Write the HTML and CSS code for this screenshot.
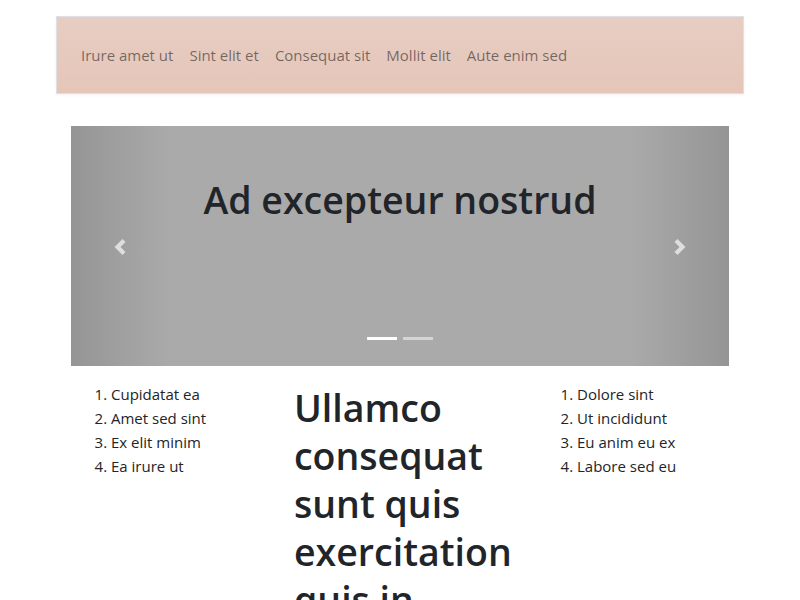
FILE: index.html
```html
<!DOCTYPE html>
<html lang="en">
<head>
<meta charset="utf-8">
<title>Page</title>
<link rel="stylesheet" href="styles.css">
</head>
<body>
<div class="container">
  <nav class="navbar">
    <a class="nav-link" href="#">Irure amet ut</a>
    <a class="nav-link" href="#">Sint elit et</a>
    <a class="nav-link" href="#">Consequat sit</a>
    <a class="nav-link" href="#">Mollit elit</a>
    <a class="nav-link" href="#">Aute enim sed</a>
  </nav>
  <div class="carousel">
    <a class="control control-prev" href="#">
      <svg width="12" height="16" viewBox="0 0 12 16"><path d="M8.5 0 L11.5 3 L6.5 8 L11.5 13 L8.5 16 L0.5 8 Z" fill="currentColor"/></svg>
    </a>
    <h1 class="carousel-title">Ad excepteur nostrud</h1>
    <a class="control control-next" href="#">
      <svg width="12" height="16" viewBox="0 0 12 16"><path d="M3.5 0 L0.5 3 L5.5 8 L0.5 13 L3.5 16 L11.5 8 Z" fill="currentColor"/></svg>
    </a>
    <ol class="indicators">
      <li class="active"></li>
      <li></li>
    </ol>
  </div>
  <div class="columns">
    <ol class="list">
      <li>Cupidatat ea</li>
      <li>Amet sed sint</li>
      <li>Ex elit minim</li>
      <li>Ea irure ut</li>
    </ol>
    <h1 class="big-heading">Ullamco consequat sunt quis exercitation quis in</h1>
    <ol class="list">
      <li>Dolore sint</li>
      <li>Ut incididunt</li>
      <li>Eu anim eu ex</li>
      <li>Labore sed eu</li>
    </ol>
  </div>
</div>
</body>
</html>
```
FILE: styles.css
```css
html, body {
  margin: 0;
  padding: 0;
  background: #fff;
}
body {
  font-family: "Open Sans", "Noto Sans", sans-serif;
  font-size: 15px;
  line-height: 24px;
  color: #212529;
}
.container {
  width: 688px;
  margin: 0 auto;
  padding-top: 16px;
}
.navbar {
  display: flex;
  align-items: center;
  height: 76px;
  padding: 0 16px;
  border: 1px solid #dde0e6;
  background: linear-gradient(to bottom, #e8cdc2, #e5c6b9);
  box-shadow: 0 1px 3px rgba(0,0,0,0.05);
}
.nav-link {
  padding: 8px;
  color: rgba(0,0,0,0.5);
  text-decoration: none;
}
.carousel {
  position: relative;
  margin: 32px 15px 0;
  height: 240px;
  background: #aaaaaa;
  text-align: center;
  overflow: hidden;
}
.carousel-title {
  margin: 0;
  padding-top: 50px;
  font-size: 37.5px;
  line-height: 48px;
  font-weight: 600;
  color: #212529;
}
.control {
  position: absolute;
  top: 0;
  bottom: 0;
  width: 15%;
  display: flex;
  align-items: center;
  justify-content: center;
  padding-top: 2px;
  box-sizing: border-box;
  color: #dedede;
}
.control-prev {
  left: 0;
  background: linear-gradient(to right, #959595 0%, #aaaaaa 100%);
}
.control-next {
  right: 0;
  background: linear-gradient(to left, #959595 0%, #aaaaaa 100%);
}
.indicators {
  position: absolute;
  left: 0;
  right: 0;
  bottom: 26px;
  margin: 0;
  padding: 0;
  list-style: none;
  display: flex;
  justify-content: center;
  gap: 6px;
}
.indicators li {
  width: 30px;
  height: 3px;
  background: rgba(255,255,255,0.5);
}
.indicators li.active {
  background: #fff;
}
.columns {
  display: grid;
  grid-template-columns: 219px 247px 192px;
  margin: 16px 15px 0;
}
.list {
  margin: 0;
  padding-left: 40px;
}
.big-heading {
  margin: 2px 0 0 4px;
  font-size: 37.5px;
  line-height: 48px;
  font-weight: 600;
  color: #212529;
}
```
